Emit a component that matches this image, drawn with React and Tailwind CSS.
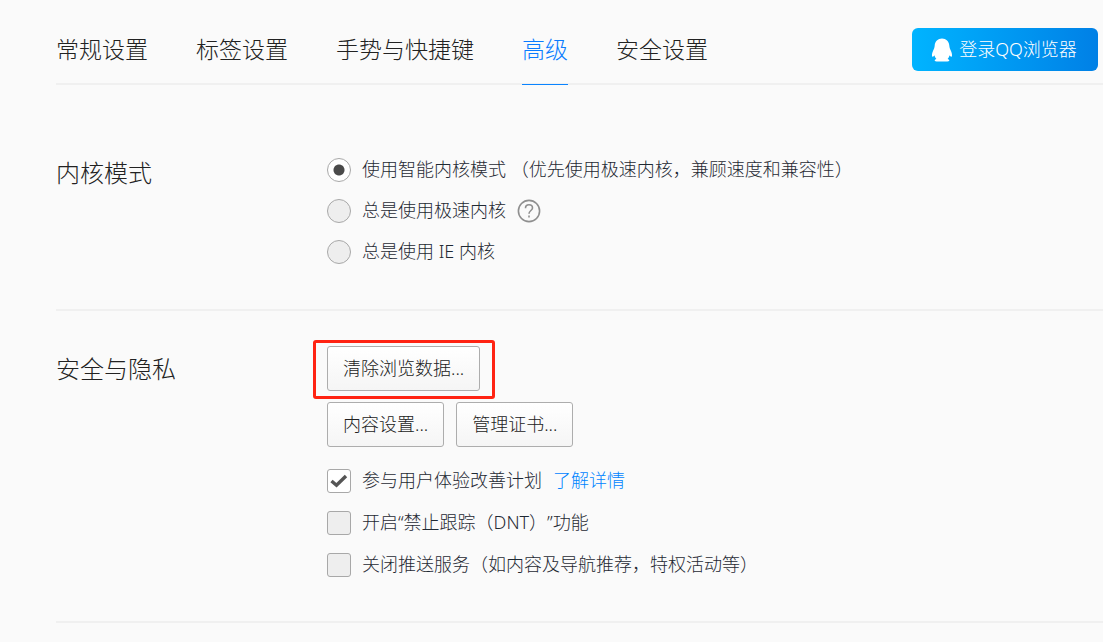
import { useState } from 'react';

const tabs = ['常规设置', '标签设置', '手势与快捷键', '高级', '安全设置'];

const kernelModes = [
  { value: 'smart', label: '使用智能内核模式 （优先使用极速内核，兼顾速度和兼容性）' },
  { value: 'fast', label: '总是使用极速内核', help: true },
  { value: 'ie', label: '总是使用 IE 内核' },
];

const privacyOptions = [
  { id: 'experience', label: '参与用户体验改善计划', link: '了解详情' },
  { id: 'dnt', label: '开启“禁止跟踪（DNT）”功能' },
  { id: 'push', label: '关闭推送服务（如内容及导航推荐，特权活动等）' },
];

function QQIcon() {
  return (
    <svg width="22" height="24" viewBox="0 0 22 24" fill="currentColor" aria-hidden="true">
      <path d="M11 0.5C6.9 0.5 3.9 3.5 3.7 7.4C3.6 9.6 2.8 11.2 1.9 13.2C1 15.3 0.7 17.4 1.2 18.4C1.6 19.1 2.6 18.6 3.4 17.2C3.7 18.7 4.4 20 5.4 21C4.3 21.4 3.7 21.9 3.7 22.5C3.7 23.3 5 23.6 7 23.6H15C17 23.6 18.3 23.3 18.3 22.5C18.3 21.9 17.7 21.4 16.6 21C17.6 20 18.3 18.7 18.6 17.2C19.4 18.6 20.4 19.1 20.8 18.4C21.3 17.4 21 15.3 20.1 13.2C19.2 11.2 18.4 9.6 18.3 7.4C18.1 3.5 15.1 0.5 11 0.5Z" />
    </svg>
  );
}

function HelpIcon() {
  return (
    <svg width="24" height="24" viewBox="0 0 24 24" fill="none" stroke="#8f8f8f" strokeWidth="1.6" aria-hidden="true">
      <circle cx="12" cy="12" r="10.6" />
      <path d="M8.5 9.2C8.5 7 10 5.8 12 5.8C14 5.8 15.5 7 15.5 8.9C15.5 11.5 12 11.6 12 14.8" />
      <path d="M12 16.6V18.4" />
    </svg>
  );
}

function PushButton({ children }) {
  return (
    <button
      type="button"
      className="h-[45px] px-[15px] rounded-[3px] border border-[#adadad] bg-linear-to-b from-white to-[#f5f5f5] text-[18px] text-[#222]"
    >
      {children}
    </button>
  );
}

function Section({ title, titleClass, children }) {
  return (
    <section className="flex border-b-2 border-[#f0f0f0]">
      <h2 className={`w-[271px] shrink-0 text-[24px] leading-9 text-[#222] ${titleClass}`}>{title}</h2>
      <div className="flex-1">{children}</div>
    </section>
  );
}

export default function App() {
  const [active, setActive] = useState('高级');
  const [mode, setMode] = useState('smart');
  const [checked, setChecked] = useState({ experience: true });

  const toggle = (id) => setChecked({ ...checked, [id]: !checked[id] });

  return (
    <div className="min-h-screen bg-[#fafafa] pl-14 font-light font-['Noto_Sans','Noto_Sans_CJK_SC',sans-serif] [text-spacing-trim:space-all]">
      {/* Tabs */}
      <header className="flex h-[85px] justify-between border-b-2 border-[#f0f0f0] pt-7">
        <nav className="flex gap-12">
          {tabs.map((tab) => (
            <button
              key={tab}
              type="button"
              onClick={() => setActive(tab)}
              className={`h-[57px] pb-[14px] border-b text-[23px] whitespace-nowrap ${
                active === tab ? 'border-[#0a84ff] text-[#0a7cff]' : 'border-transparent text-[#222]'
              }`}
            >
              {tab}
            </button>
          ))}
        </nav>
        <button
          type="button"
          className="mr-[5px] flex h-[43px] w-[186px] items-center justify-center gap-[6px] rounded-md bg-linear-to-r from-[#00b4ff] to-[#0080e6] pr-[2px] text-[18px] text-white whitespace-nowrap"
        >
          <QQIcon />
          登录QQ浏览器
        </button>
      </header>

      <div className="pt-[70px]">
        <Section title="内核模式" titleClass="pt-0">
          <div className="flex flex-col gap-[17px] pt-[3px] pb-[45px]">
            {kernelModes.map((item) => (
              <div key={item.value} className="flex h-6 items-center gap-[11px]">
                <label className="flex items-center gap-[11px] text-[18px] leading-6 text-[#1f2933]">
                  <input
                    type="radio"
                    name="kernel"
                    checked={mode === item.value}
                    onChange={() => setMode(item.value)}
                    className="size-6 shrink-0 appearance-none rounded-full border border-[#a8a8a8] bg-[#eee] checked:bg-white checked:bg-[radial-gradient(circle,#4a4a4a_5px,transparent_6px)]"
                  />
                  <span className="pb-[3px]">{item.label}</span>
                </label>
                {item.help && (
                  <button type="button" aria-label="帮助">
                    <HelpIcon />
                  </button>
                )}
              </div>
            ))}
          </div>
        </Section>
      </div>

      <div className="pt-[29px]">
        <Section title="安全与隐私" titleClass="pt-[11px]">
          {/* Highlighted clear-data button */}
          <div className="-ml-[14px] flex w-fit rounded-[3px] border-3 border-[#ff2312] pt-[3px] pb-[5px] pl-[11px] pr-3">
            <PushButton>清除浏览数据...</PushButton>
          </div>
          <div className="mt-[3px] flex gap-3">
            <PushButton>内容设置...</PushButton>
            <PushButton>管理证书...</PushButton>
          </div>
          <div className="flex flex-col gap-[18px] pt-[22px] pb-11">
            {privacyOptions.map((item) => (
              <div key={item.id} className="flex h-6 items-center gap-[11px] text-[18px] leading-6">
                <label className="flex items-center gap-[11px] text-[#1f2933]">
                  <span className="relative flex size-6 shrink-0">
                    <input
                      type="checkbox"
                      checked={!!checked[item.id]}
                      onChange={() => toggle(item.id)}
                      className="size-6 appearance-none rounded-[3px] border border-[#a8a8a8] bg-[#eee] checked:bg-white"
                    />
                    {checked[item.id] && (
                      <svg className="pointer-events-none absolute inset-0" width="24" height="24" viewBox="0 0 24 24" fill="none" stroke="#555" strokeWidth="3.4">
                        <path d="M4.5 12L9.5 16.3L19 7" />
                      </svg>
                    )}
                  </span>
                  <span className="pb-[3px]">{item.label}</span>
                </label>
                {item.link && (
                  <a href="#" className="pb-[3px] text-[#0084ff]">{item.link}</a>
                )}
              </div>
            ))}
          </div>
        </Section>
      </div>
    </div>
  );
}
